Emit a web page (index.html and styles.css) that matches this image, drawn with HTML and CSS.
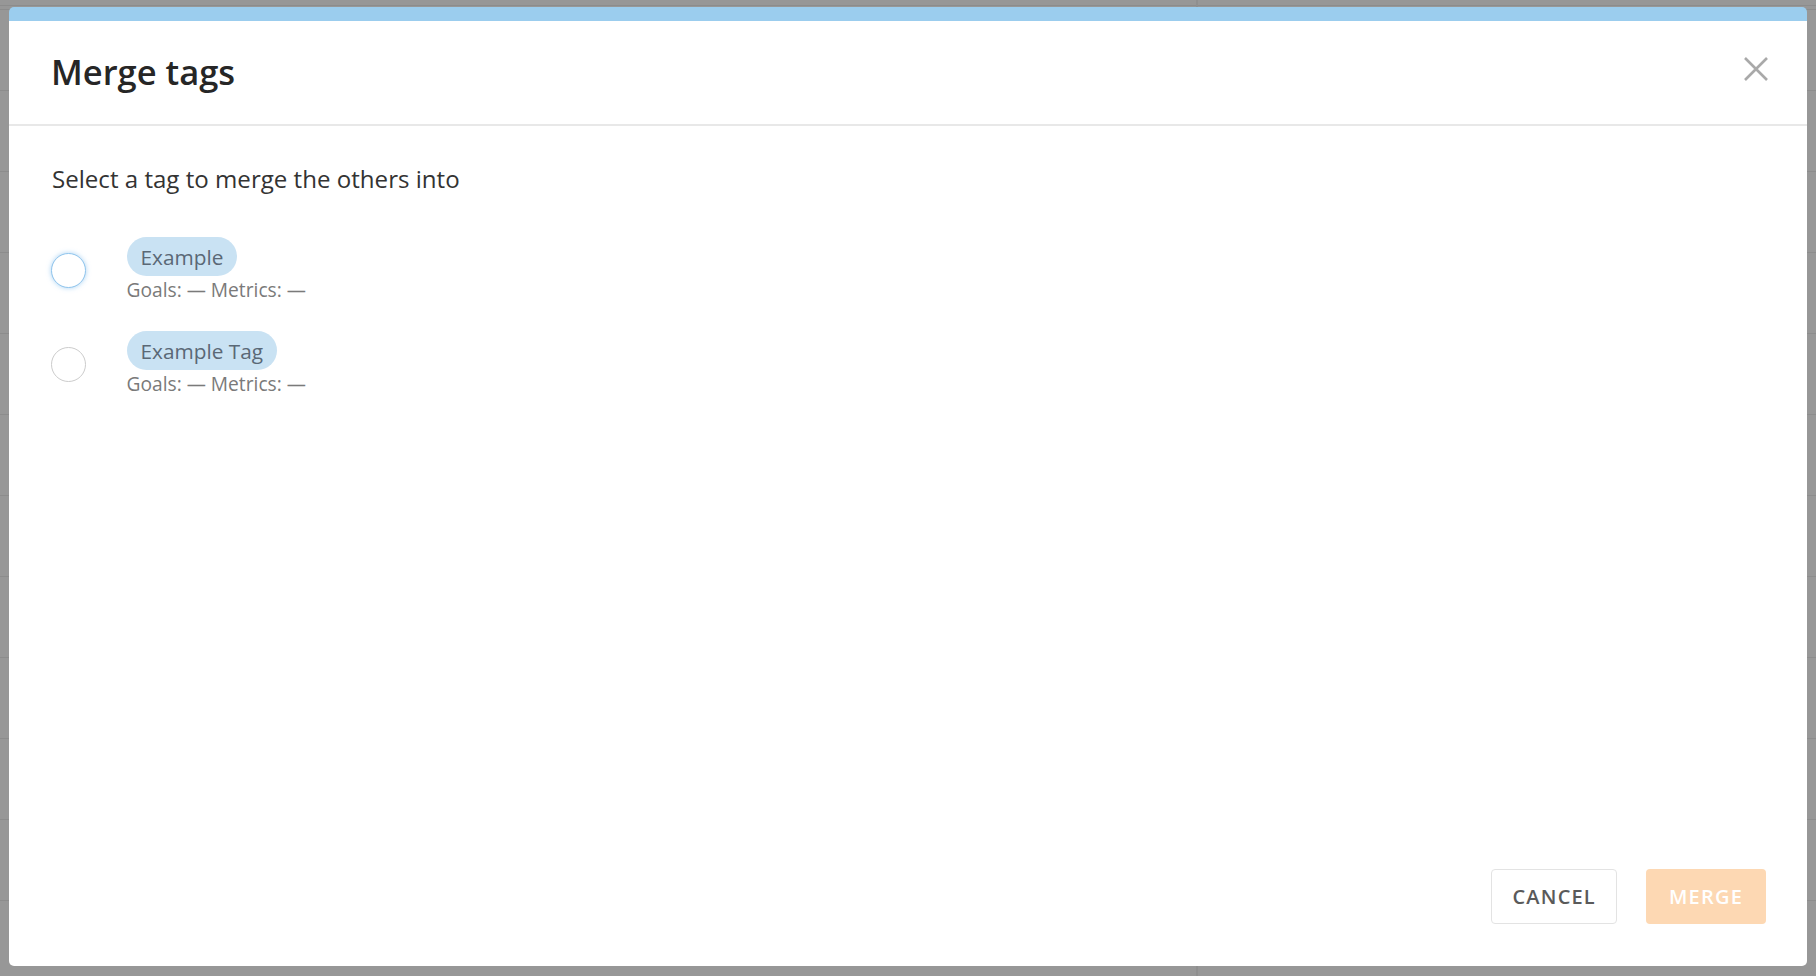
FILE: index.html
```html
<!DOCTYPE html>
<html lang="en">
<head>
<meta charset="utf-8">
<title>Merge tags</title>
<link rel="stylesheet" href="styles.css">
</head>
<body>
<div class="backdrop">
  <div class="modal" role="dialog" aria-labelledby="merge-title">
    <div class="modal-header">
      <h2 id="merge-title" class="modal-title">Merge tags</h2>
      <button class="close-btn" aria-label="Close">
        <svg viewBox="0 0 24 24" width="24" height="24" aria-hidden="true">
          <path d="M1 1 L23 23 M23 1 L1 23" stroke="#a9a9a9" stroke-width="2.6" fill="none"/>
        </svg>
      </button>
    </div>
    <div class="modal-body">
      <p class="lead">Select a tag to merge the others into</p>
      <div class="tag-list">
        <label class="tag-row">
          <span class="radio radio-focus"></span>
          <span class="tag-info">
            <span class="pill">Example</span>
            <span class="meta">Goals: — Metrics: —</span>
          </span>
        </label>
        <label class="tag-row">
          <span class="radio"></span>
          <span class="tag-info">
            <span class="pill">Example Tag</span>
            <span class="meta">Goals: — Metrics: —</span>
          </span>
        </label>
      </div>
    </div>
    <div class="modal-footer">
      <button class="btn btn-cancel">CANCEL</button>
      <button class="btn btn-merge">MERGE</button>
    </div>
  </div>
</div>
</body>
</html>
```

FILE: styles.css
```css
* { box-sizing: border-box; }

html, body {
  margin: 0;
  padding: 0;
  height: 100%;
}

body {
  font-family: "Open Sans", "Liberation Sans", sans-serif;
  background: #979797;
}

.backdrop {
  height: 976px;
  padding: 7px 9px 10px 9px;
  background-color: #979797;
  background-image:
    linear-gradient(to right, transparent 1196px, #8f8f8f 1196px, #8f8f8f 1198px, transparent 1198px),
    repeating-linear-gradient(to bottom, #8c8c8c 0, #8c8c8c 1px, transparent 1px, transparent 81px);
  background-position: 0 0, 0 9px;
  display: flex;
}

.modal {
  flex: 1;
  display: flex;
  flex-direction: column;
  background: #ffffff;
  border-top: 14px solid #9bcdee;
  border-radius: 5px;
  overflow: hidden;
}

.modal-header {
  display: flex;
  justify-content: space-between;
  align-items: flex-start;
  padding: 28px 39px 29px 42px;
  border-bottom: 2px solid #e8e8e8;
}

.modal-title {
  margin: 0;
  font-size: 34.5px;
  line-height: 46px;
  font-weight: 600;
  color: #262626;
}

.close-btn {
  margin-top: 8px;
  padding: 0;
  border: 0;
  background: none;
  width: 24px;
  height: 24px;
  cursor: pointer;
}

.close-btn svg { display: block; }

.modal-body {
  flex: 1;
  padding: 37px 43px 0 43px;
}

.lead {
  margin: 0;
  font-size: 24.1px;
  line-height: 32px;
  color: #333333;
}

.tag-list {
  display: flex;
  flex-direction: column;
  gap: 29px;
  margin-top: 42px;
}

.tag-row {
  display: flex;
  align-items: flex-start;
  gap: 41px;
}

.radio {
  flex: none;
  width: 35px;
  height: 35px;
  margin-top: 15.5px;
  margin-left: -1.5px;
  border-radius: 50%;
  border: 1.5px solid #cccccc;
  background: #fff;
}

.radio-focus {
  border-color: #8fc4ec;
  box-shadow: 0 0 5px rgba(102, 175, 233, 0.55);
}

.tag-info {
  display: flex;
  flex-direction: column;
  align-items: flex-start;
}

.pill {
  display: inline-block;
  height: 39px;
  line-height: 40px;
  padding: 0 14px 0 14px;
  border-radius: 20px;
  background: #c9e2f3;
  color: #5a6876;
  font-size: 20.8px;
}

.meta {
  margin-top: 2px;
  font-size: 19.2px;
  line-height: 24px;
  color: #7a7a7a;
}

.modal-footer {
  display: flex;
  justify-content: flex-end;
  gap: 29px;
  padding: 0 41px 42px 0;
}

.btn {
  height: 55px;
  padding: 0 22px;
  border-radius: 4px;
  font-family: "Open Sans", "Liberation Sans", sans-serif;
  font-size: 20px;
  font-weight: 600;
  letter-spacing: 1.2px;
  cursor: pointer;
}

.btn-cancel {
  padding: 0 20px;
  background: #ffffff;
  border: 1.5px solid #e3e3e3;
  color: #5a5a5a;
}

.btn-merge {
  padding: 0 23px;
  background: #fdd8b3;
  border: 0;
  color: #ffffff;
}
```
